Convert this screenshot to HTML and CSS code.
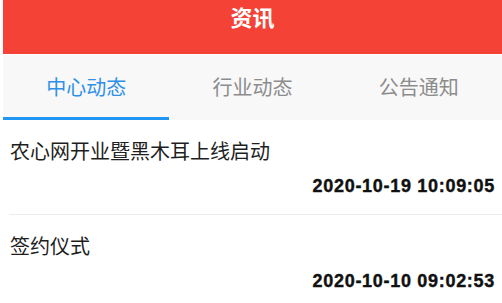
FILE: index.html
```html
<!DOCTYPE html>
<html lang="zh-CN">
<head>
<meta charset="utf-8">
<title>资讯</title>
<link rel="stylesheet" href="styles.css">
</head>
<body>
<div class="page">
  <header class="header">资讯</header>
  <nav class="tabs">
    <div class="tab active"><span class="tab-label">中心动态</span></div>
    <div class="tab"><span class="tab-label">行业动态</span></div>
    <div class="tab"><span class="tab-label">公告通知</span></div>
  </nav>
  <ul class="list">
    <li class="item">
      <div class="item-title">农心网开业暨黑木耳上线启动</div>
      <div class="item-date">2020-10-19 10:09:05</div>
    </li>
    <li class="item">
      <div class="item-title">签约仪式</div>
      <div class="item-date">2020-10-10 09:02:53</div>
    </li>
  </ul>
</div>
</body>
</html>
```

FILE: styles.css
```css
html, body {
  margin: 0;
  padding: 0;
  background: #ffffff;
}

body {
  font-family: "Noto Sans CJK SC", "Noto Sans", sans-serif;
  overflow: hidden;
}

.page {
  padding-left: 3px;
}

.header {
  height: 54px;
  background: #f44336;
  color: #ffffff;
  font-size: 22px;
  font-weight: 700;
  line-height: 32px;
  text-align: center;
}

.tabs {
  display: grid;
  grid-template-columns: 1fr 1fr 1fr;
  background: #f8f8f9;
  margin-top: 1px;
}

.tab {
  height: 62px;
  display: flex;
  align-items: center;
  justify-content: center;
  border-bottom: 3px solid transparent;
  font-size: 20px;
  color: #8c8c8c;
}

.tab.active {
  color: #2e90e6;
  border-bottom-color: #2196f3;
}

.list {
  list-style: none;
  margin: 0;
  padding: 0 0 0 6px;
}

.item {
  padding: 17px 0 16px 0;
  border-bottom: 1px solid #ececec;
}

.item-title {
  font-size: 20px;
  line-height: 28px;
  color: #1e1e1e;
  padding-left: 1px;
}

.item-date {
  margin-top: 9px;
  padding-right: 7px;
  text-align: right;
  font-family: "Liberation Sans", Arial, sans-serif;
  font-weight: 700;
  font-size: 18px;
  letter-spacing: 0.7px;
  line-height: 24px;
  color: #111111;
  -webkit-text-stroke: 0.4px #111111;
}
```
